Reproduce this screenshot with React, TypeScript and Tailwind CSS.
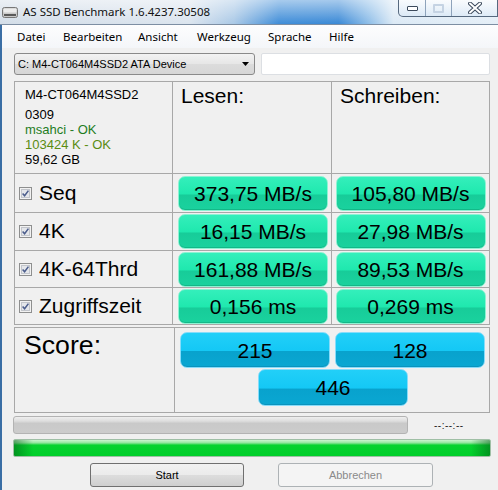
import clsx from 'clsx';

const rows = [
    {name: 'Seq', read: '373,75 MB/s', write: '105,80 MB/s'},
    {name: '4K', read: '16,15 MB/s', write: '27,98 MB/s'},
    {name: '4K-64Thrd', read: '161,88 MB/s', write: '89,53 MB/s'},
    {name: 'Zugriffszeit', read: '0,156 ms', write: '0,269 ms'},
];

const menu = [
    {label: 'Datei', w: 'w-[46px]'},
    {label: 'Bearbeiten', w: 'w-[75px]'},
    {label: 'Ansicht', w: 'w-[59px]'},
    {label: 'Werkzeug', w: 'w-[71px]'},
    {label: 'Sprache', w: 'w-[61px]'},
    {label: 'Hilfe', w: 'w-[40px]'},
];

const ValueBox = ({text, blue, h = 'h-[35px]'}: {text: string; blue?: boolean; h?: string}) => (
    <div
        className={clsx(
            'w-[150px] rounded-[7px] border flex items-center justify-center text-[21px] leading-none text-black',
            h,
            blue
                ? 'border-[#86dcfa] bg-[linear-gradient(to_bottom,#22cff8_0%,#14c8f5_52%,#08a2cd_54%,#0aa7d2_100%)] shadow-[inset_0_-1px_0_#0b93bd]'
                : 'border-[#8cf3d3] bg-[linear-gradient(to_bottom,#34efbb_0%,#1fe8ae_52%,#17cc99_54%,#1ad29e_100%)] shadow-[inset_0_-1px_0_#13b888]'
        )}
    >
        {text}
    </div>
);

const CheckBox = () => (
    <svg width="13" height="13" viewBox="0 0 13 13" className="shrink-0">
        <rect x="0.5" y="0.5" width="12" height="12" fill="#f2f2f2" stroke="#8e8f8f"/>
        <rect x="2.5" y="2.5" width="8" height="8" fill="#e4e6ea" stroke="#c2c5cb"/>
        <path d="M3.6 6.4 L5.6 8.8 L9.4 3.6" stroke="#4b5d8c" strokeWidth="1.5" fill="none"/>
    </svg>
);

const App = () => {
    return (
        <div className="w-[498px] h-[490px] overflow-hidden bg-[#f0f0f0] font-['Liberation_Sans',Arial,sans-serif] text-black">
            {/* title bar */}
            <div
                className="h-[25px] flex items-center border-b border-[#7d8ea3] bg-[linear-gradient(to_bottom,rgba(255,255,255,0.55),rgba(255,255,255,0)),linear-gradient(90deg,#d3dde8_0%,#dbe4ee_38%,#a9c8e6_47%,#3f8dd8_56%,#3a89d6_68%,#8dbde8_74%,#dbe9f5_79%,#e4eef7_100%)]">
                <svg width="16" height="14" viewBox="0 0 16 14" className="ml-[2px] shrink-0">
                    <rect x="0.5" y="2.5" width="15" height="10" rx="2" fill="#c9c9c9" stroke="#777"/>
                    <rect x="1.5" y="3.5" width="13" height="4" rx="1" fill="#ececec"/>
                    <rect x="2" y="9" width="12" height="2" fill="#5a5a5a"/>
                </svg>
                <span className="ml-[5px] font-['Noto_Sans',sans-serif] text-[11.5px] text-[#111]">
                    AS SSD Benchmark 1.6.4237.30508
                </span>
                <div
                    className="ml-auto self-start flex h-[17px] border border-t-0 border-[#56697f] rounded-bl-[5px] overflow-hidden bg-[linear-gradient(to_bottom,rgba(255,255,255,0.6),rgba(205,225,245,0.35))]">
                    <div className="w-[27px] flex items-end justify-center pb-[5px] border-r border-[#8ea3bb]">
                        <div className="w-[11px] h-[5px] bg-white border border-[#3c4a5c] rounded-[1px]"/>
                    </div>
                    <div className="w-[26px] flex items-center justify-center border-r border-[#8ea3bb]">
                        <div className="w-[11px] h-[9px] border-[2px] border-[#c5d3e3] rounded-[1px]"/>
                    </div>
                    <div className="w-[45px] flex items-center justify-center">
                        <svg width="14" height="12" viewBox="0 0 14 12">
                            <path d="M2 1.5 L12 10.5 M12 1.5 L2 10.5" stroke="#3c4a5c" strokeWidth="4" strokeLinecap="round"/>
                            <path d="M2 1.5 L12 10.5 M12 1.5 L2 10.5" stroke="#fff" strokeWidth="2" strokeLinecap="round"/>
                        </svg>
                    </div>
                </div>
            </div>

            <div className="h-[465px] border-l-[2px] border-[#3a6ea5]">
                {/* menu */}
                <div
                    className="h-[23px] flex items-center pl-[14px] pt-[1px] bg-[linear-gradient(to_bottom,#fdfdfe,#f4f6f9)] font-['Noto_Sans',sans-serif] text-[11.5px]">
                    {menu.map(m => (
                        <span key={m.label} className={clsx(m.w, 'pl-[1px]')}>{m.label}</span>
                    ))}
                </div>

                <div className="pl-[12px]">
                    {/* drive selector */}
                    <div className="flex mt-[5px] h-[22px]">
                        <div
                            className="w-[241px] flex items-center pl-[3px] pr-[5px] border border-[#8a8a8a] rounded-[3px] bg-[linear-gradient(to_bottom,#f3f3f3,#e6e6e6_50%,#dcdcdc_51%,#d6d6d6)] text-[11px]">
                            <span>C: M4-CT064M4SSD2 ATA Device</span>
                            <svg width="7" height="4" viewBox="0 0 7 4" className="ml-auto">
                                <path d="M0 0 H7 L3.5 4 Z" fill="#000"/>
                            </svg>
                        </div>
                        <div className="ml-[6px] w-[229px] bg-white border border-[#dcdfe3] rounded-[2px]"/>
                    </div>

                    {/* results */}
                    <div
                        className="mt-[6px] w-[476px] grid grid-cols-[157px_158px_157px] grid-rows-[91px_38px_37px_36px_36px] gap-px p-px bg-[#a8a8a8]">
                        <div className="bg-[#f0f0f0] pl-[10px] pt-[5px] text-[13px] leading-[15px]">
                            <div className="mb-[5px]">M4-CT064M4SSD2</div>
                            <div>0309</div>
                            <div className="text-[#1f7d1f]">msahci - OK</div>
                            <div className="text-[#5a8c12]">103424 K - OK</div>
                            <div>59,62 GB</div>
                        </div>
                        <div className="bg-[#f0f0f0] pl-[8px] pt-[2px] text-[21px] leading-[24px]">Lesen:</div>
                        <div className="bg-[#f0f0f0] pl-[8px] pt-[2px] text-[21px] leading-[24px]">Schreiben:</div>
                        {rows.map(r => (
                            <div key={r.name} className="contents">
                                <div className="bg-[#f0f0f0] flex items-center pl-[4px] gap-[7px]">
                                    <CheckBox/>
                                    <span className="text-[21px] leading-none -mt-[2px]">{r.name}</span>
                                </div>
                                <div className="bg-[#f0f0f0] flex items-center justify-center pl-[2px]">
                                    <ValueBox text={r.read}/>
                                </div>
                                <div className="bg-[#f0f0f0] flex items-center justify-center">
                                    <ValueBox text={r.write}/>
                                </div>
                            </div>
                        ))}
                    </div>

                    {/* score */}
                    <div className="mt-[2px] w-[476px] grid grid-cols-[159px_314px] h-[86px] gap-px p-px bg-[#a8a8a8]">
                        <div className="bg-[#f0f0f0] pl-[9px] pt-[2px] text-[26.67px] leading-[30px]">Score:</div>
                        <div className="bg-[#f0f0f0] pt-[4px] pl-[5px] flex flex-col gap-[1px]">
                            <div className="flex gap-[5px]">
                                <ValueBox text="215" blue h="h-[36px]"/>
                                <ValueBox text="128" blue h="h-[36px]"/>
                            </div>
                            <div className="pl-[78px]">
                                <ValueBox text="446" blue h="h-[37px]"/>
                            </div>
                        </div>
                    </div>

                    {/* progress */}
                    <div className="mt-[3px] -ml-[1px] flex items-center h-[18px]">
                        <div
                            className="w-[395px] h-full border border-[#b3b3b3] rounded-[3px] bg-[linear-gradient(to_bottom,#efefef_0%,#dedede_25%,#c9c9c9_40%,#cccccc_100%)]"/>
                        <span className="ml-[26px] text-[10px] text-[#222] tracking-[0.5px]">--:--:--</span>
                    </div>
                    <div
                        className="mt-[5px] -ml-[1px] w-[478px] h-[18px] border border-[#9fbfa5] rounded-[2px] bg-[linear-gradient(90deg,rgba(0,90,20,0.5)_0%,rgba(0,90,20,0)_4%,rgba(0,90,20,0)_96%,rgba(0,90,20,0.5)_100%),linear-gradient(to_bottom,#cdf4d1_0%,#93e69e_18%,#07d22f_32%,#00cf2a_100%)]"/>

                    {/* buttons */}
                    <div className="mt-[6px] flex h-[24px] text-[11px]">
                        <div
                            className="ml-[76px] w-[154px] flex items-center justify-center border border-[#707070] rounded-[3px] bg-[linear-gradient(to_bottom,#f2f2f2_0%,#ebebeb_50%,#dddddd_50%,#cfcfcf_100%)]">
                            Start
                        </div>
                        <div
                            className="ml-[34px] w-[155px] flex items-center justify-center border border-[#adb2b5] rounded-[3px] bg-[#f4f4f4] text-[#8a8a8a]">
                            Abbrechen
                        </div>
                    </div>
                </div>
            </div>
        </div>
    );
};

export default App;
